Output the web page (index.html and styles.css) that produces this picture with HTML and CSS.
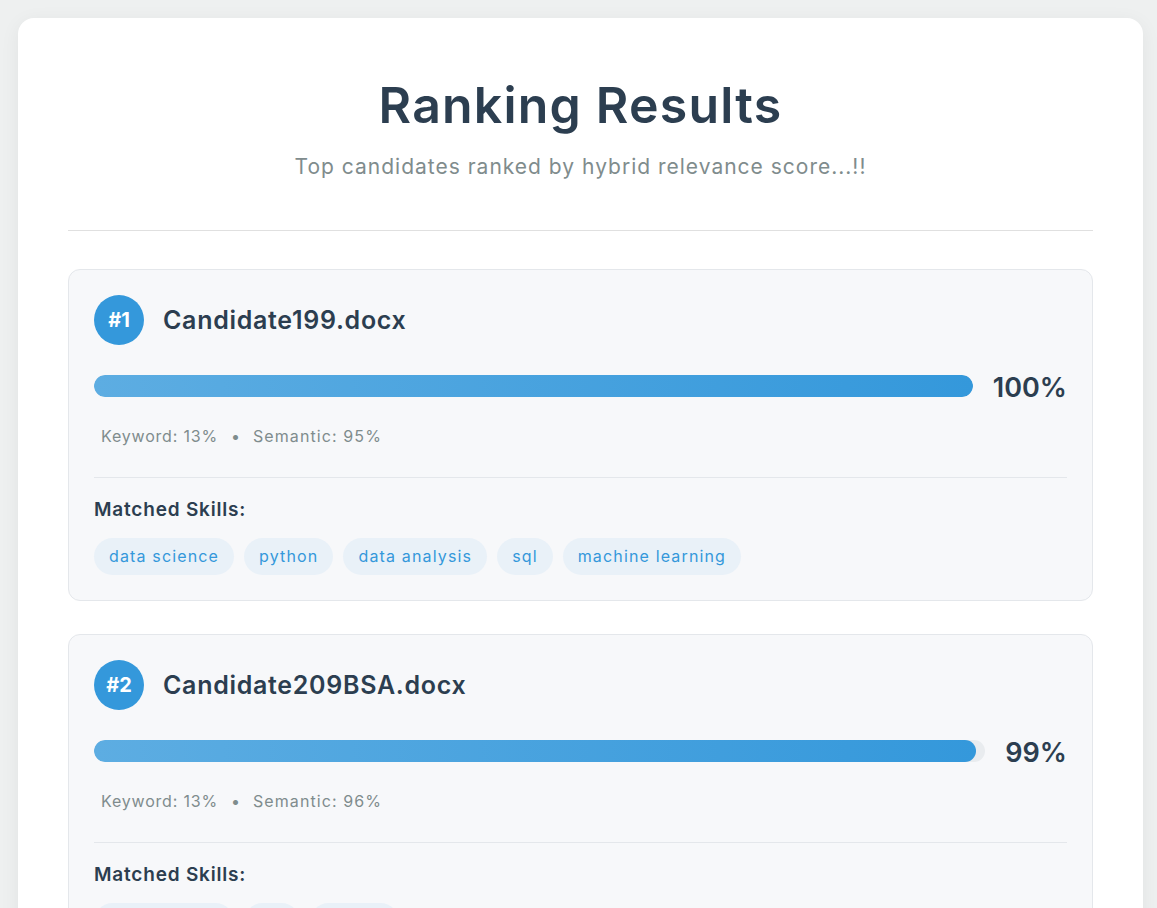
FILE: index.html
```html
<!DOCTYPE html>
<html lang="en">
<head>
<meta charset="utf-8">
<title>Ranking Results</title>
<link rel="stylesheet" href="styles.css">
</head>
<body>
<main class="container">
  <header class="page-header">
    <h1 class="title">Ranking Results</h1>
    <p class="subtitle">Top candidates ranked by hybrid relevance score...!!</p>
  </header>
  <hr class="divider">
  <section class="results">
    <article class="card">
      <div class="card-head">
        <span class="rank">#1</span>
        <h2 class="name">Candidate199.docx</h2>
      </div>
      <div class="score-row">
        <div class="track"><div class="fill" style="width:100%"></div></div>
        <span class="percent">100%</span>
      </div>
      <div class="breakdown">
        <span>Keyword: 13%</span>
        <span class="dot">•</span>
        <span class="sem">Semantic: 95%</span>
      </div>
      <div class="skills">
        <h3 class="skills-title">Matched Skills:</h3>
        <ul class="tags">
          <li class="tag">data science</li>
          <li class="tag">python</li>
          <li class="tag">data analysis</li>
          <li class="tag">sql</li>
          <li class="tag">machine learning</li>
        </ul>
      </div>
    </article>
    <article class="card">
      <div class="card-head">
        <span class="rank">#2</span>
        <h2 class="name">Candidate209BSA.docx</h2>
      </div>
      <div class="score-row">
        <div class="track"><div class="fill" style="width:99%"></div></div>
        <span class="percent">99%</span>
      </div>
      <div class="breakdown">
        <span>Keyword: 13%</span>
        <span class="dot">•</span>
        <span class="sem">Semantic: 96%</span>
      </div>
      <div class="skills">
        <h3 class="skills-title">Matched Skills:</h3>
        <ul class="tags">
          <li class="tag">data science</li>
          <li class="tag">sql</li>
          <li class="tag">python</li>
        </ul>
      </div>
    </article>
  </section>
</main>
</body>
</html>
```
FILE: styles.css
```css
* { box-sizing: border-box; }
html, body { margin: 0; padding: 0; }
body {
  background: #eef0f0;
  font-family: "Inter", "Noto Sans", sans-serif;
  color: #2c3e50;
  padding: 18px 14px 18px 18px;
}
.container {
  background: #ffffff;
  border-radius: 16px;
  box-shadow: 0 4px 20px rgba(0,0,0,0.06);
  padding: 56px 50px 50px;
}
.page-header { text-align: center; }
.title {
  margin: 0;
  font-size: 50px;
  font-weight: 600;
  line-height: 62px;
  letter-spacing: 1.2px;
  color: #2c3e50;
}
.subtitle {
  margin: 17px 0 0;
  font-size: 21px;
  line-height: 28px;
  letter-spacing: 1px;
  color: #7f8c8d;
}
.divider {
  border: 0;
  border-top: 1px solid #e0e0e0;
  margin: 49px 0 38px;
}
.results { display: flex; flex-direction: column; gap: 33px; }
.card {
  background: #f7f8fa;
  border: 1px solid #e4e7eb;
  border-radius: 12px;
  padding: 25px 25px 25px;
}
.card-head { display: flex; align-items: center; gap: 19px; }
.rank {
  width: 50px; height: 50px;
  border-radius: 50%;
  background: #3498db;
  color: #fff;
  font-weight: 700;
  font-size: 20px;
  display: flex; align-items: center; justify-content: center;
}
.name {
  margin: 0;
  font-size: 25px;
  font-weight: 600;
  letter-spacing: 0.7px;
  color: #2c3e50;
}
.score-row {
  display: flex; align-items: center; gap: 20px;
  margin-top: 30px;
}
.track {
  flex: 1;
  height: 22px;
  background: #e9ecef;
  border-radius: 11px;
  overflow: hidden;
}
.fill {
  height: 100%;
  border-radius: 11px;
  background: linear-gradient(90deg, #5dade2, #3498db);
}
.percent {
  font-size: 27px;
  font-weight: 600;
  color: #2c3e50;
  line-height: 22px;
  position: relative;
  top: 2px;
}
.breakdown {
  display: flex; gap: 13px;
  margin-top: 27px;
  padding-left: 7px;
  font-size: 16px;
  line-height: 24px;
  letter-spacing: 0.8px;
  color: #7f8c8d;
}
.dot { color: #7f8c8d; letter-spacing: 0; }
.sem { letter-spacing: 1.1px; }
.skills {
  margin-top: 29px;
  border-top: 1px solid #e4e7eb;
  padding-top: 20px;
}
.skills-title {
  margin: 0;
  font-size: 19px;
  font-weight: 600;
  line-height: 24px;
  letter-spacing: 0.8px;
  color: #2c3e50;
}
.tags {
  list-style: none;
  margin: 16px 0 0;
  padding: 0;
  display: flex; flex-wrap: wrap; gap: 10px;
}
.tag {
  background: #e9f1f8;
  color: #3498db;
  font-size: 16px;
  line-height: 25px;
  letter-spacing: 1.15px;
  padding: 6px 15px;
  border-radius: 20px;
}
```
